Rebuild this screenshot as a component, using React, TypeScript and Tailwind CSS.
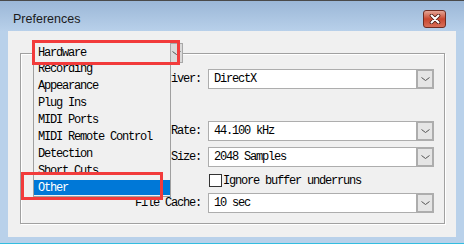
import React from "react";

const mono = "font-['Liberation_Mono',monospace] text-[12px] tracking-[-1.2px] text-black";

function Chevron() {
  return (
    <svg width="9" height="6" viewBox="0 0 9 6">
      <path d="M0.5 1.5 L4.5 4.5 L8.5 1.5" fill="none" stroke="#555555" strokeWidth="1" />
    </svg>
  );
}

function Combo({ value }: { value: string }) {
  return (
    <div className="ml-[7px] w-[226px] h-[20px] flex border border-[#adadad] bg-white">
      <div className={`flex-1 flex items-center pl-[5px] ${mono}`}>{value}</div>
      <div className="w-[17px] h-full flex items-center justify-center bg-[#e5e5e5] border border-l-2 border-[#adadad]">
        <Chevron />
      </div>
    </div>
  );
}

function Row({ label, value, className }: { label: string; value: string; className: string }) {
  return (
    <div className={`flex items-center ${className}`}>
      <div className={`w-[180px] text-right whitespace-nowrap ${mono}`}>{label}</div>
      <Combo value={value} />
    </div>
  );
}

const pages = [
  "Recording",
  "Appearance",
  "Plug Ins",
  "MIDI Ports",
  "MIDI Remote Control",
  "Detection",
  "Short Cuts",
  "Other",
];

export default function App() {
  return (
    <div className="relative w-[464px] h-[244px] flex flex-col bg-[#b9d1ea] border-t border-[#4a4a4a] border-b border-b-[#33bde0]">
      {/* title bar */}
      <div className="h-[30px] flex items-center pt-[6px] pl-[13px] pr-[18px] bg-gradient-to-b from-[#9bb7d7] to-[#b8d0ea]">
        <span className="font-['Liberation_Sans',Arial,sans-serif] text-[12.5px] text-[#1b1b1b]">Preferences</span>
        <div className="ml-auto w-[23px] h-[18px] rounded-[3px] border border-[#6e2c22] bg-gradient-to-b from-[#e3a596] via-[#c8462f] to-[#d86e58] flex items-center justify-center">
          <svg width="12" height="10" viewBox="0 0 12 10">
            <path d="M2.5 1.5 L9.5 8.5 M9.5 1.5 L2.5 8.5" stroke="#4a1a12" strokeWidth="3.6" strokeLinecap="round" />
            <path d="M2.5 1.5 L9.5 8.5 M9.5 1.5 L2.5 8.5" stroke="#ffffff" strokeWidth="2" strokeLinecap="round" />
          </svg>
        </div>
      </div>

      {/* client area */}
      <div className="mx-[8px] h-[206px] bg-[#f0f0f0] pt-[22px] pl-[12px]">
        <div className="relative w-[425px] h-[171px] border border-[#a0a0a0] shadow-[1px_1px_0_#fff,inset_1px_1px_0_#fff]">
          <div className="flex flex-col">
            <Row label="Audio Driver:" value="DirectX" className="mt-[15px]" />
            <Row label="Sample Rate:" value="44.100 kHz" className="mt-[32px]" />
            <Row label="Buffer Size:" value="2048 Samples" className="mt-[6px]" />
            <div className="mt-[7px] h-[13px] flex items-center pl-[188px]">
              <div className="w-[13px] h-[13px] border border-[#333] bg-white" />
              <span className={`ml-[1px] ${mono}`}>Ignore buffer underruns</span>
            </div>
            <Row label="File Cache:" value="10 sec" className="mt-[6px]" />
          </div>

          {/* page selector combo, open */}
          <div className="absolute left-[13px] top-[-11px] w-[149px] h-[20px] flex bg-[#f0f0f0]">
            <div className={`flex-1 flex items-center pl-[4px] ${mono}`}>Hardware</div>
            <div className="w-[13px] h-full flex items-center justify-center bg-[#dadada] border border-[#a8a8a8]">
              <Chevron />
            </div>
          </div>
          <div className="absolute left-[12px] top-[6px] w-[138px] flex flex-col bg-[#f0f0f0] border-x border-b border-[#a0a0a0]">
            {pages.map((p) => (
              <div key={p} className="h-[17px] flex">
                {p === "Other" ? (
                  <div className={`mt-[1px] h-[15px] w-full flex items-center pl-[4px] bg-[#0078d7] ${mono} text-white`}>{p}</div>
                ) : (
                  <div className={`w-full flex items-center pl-[4px] whitespace-nowrap ${mono}`}>{p}</div>
                )}
              </div>
            ))}
          </div>
        </div>
      </div>

      {/* annotation marks */}
      <div className="absolute left-[32px] top-[39px] w-[148px] h-[25px] border-[3px] border-[#f23b3b]" />
      <div className="absolute left-[21px] top-[171px] w-[142px] h-[28px] border-[3px] border-[#f23b3b]" />
    </div>
  );
}
